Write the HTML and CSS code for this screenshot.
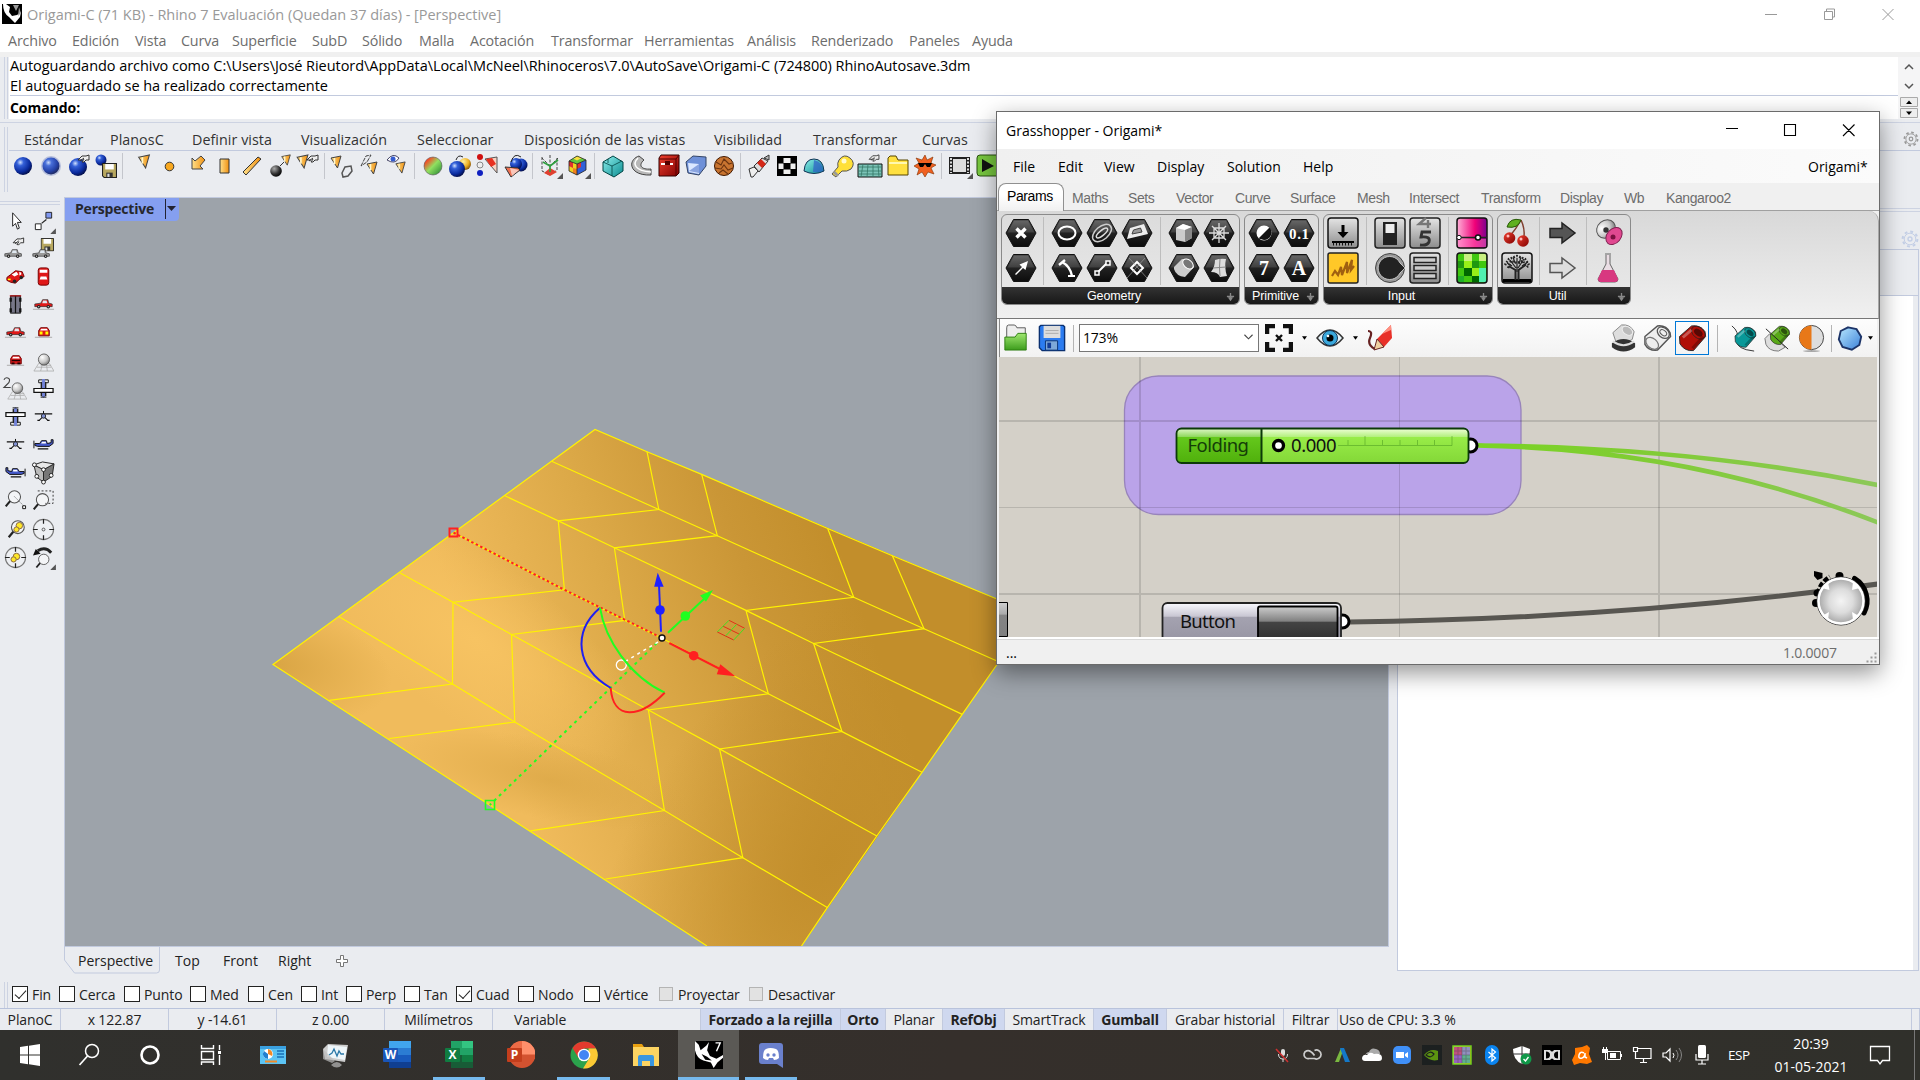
FILE: index.html
```html
<!DOCTYPE html>
<html lang="es">
<head>
<meta charset="utf-8">
<title>Origami-C (71 KB) - Rhino 7</title>
<link rel="stylesheet" href="styles.css">
</head>
<body>
<svg class="defs" width="0" height="0" aria-hidden="true">
<defs>
<radialGradient id="blue" cx=".35" cy=".3" r=".75"><stop offset="0" stop-color="#cfe0ff"/><stop offset=".25" stop-color="#3460d8"/><stop offset=".7" stop-color="#0a2a9c"/><stop offset="1" stop-color="#040c40"/></radialGradient>
<radialGradient id="grayb" cx=".35" cy=".3" r=".75"><stop offset="0" stop-color="#fff"/><stop offset=".6" stop-color="#c8c8c8"/><stop offset="1" stop-color="#777"/></radialGradient>
<radialGradient id="gold" cx=".35" cy=".3" r=".75"><stop offset="0" stop-color="#fff0a0"/><stop offset=".6" stop-color="#f0b020"/><stop offset="1" stop-color="#805008"/></radialGradient>
<radialGradient id="bomb" cx=".35" cy=".3" r=".75"><stop offset="0" stop-color="#aaa"/><stop offset=".6" stop-color="#333"/><stop offset="1" stop-color="#000"/></radialGradient>
<linearGradient id="or" x1="0" x2="1" y1="0" y2="0"><stop offset="0" stop-color="#ffe08a"/><stop offset="1" stop-color="#f09010"/></linearGradient>
<linearGradient id="rgb" x1="0" x2="1" y1="0" y2="1"><stop offset=".15" stop-color="#ff3a20"/><stop offset=".5" stop-color="#90e060"/><stop offset="1" stop-color="#208030"/></linearGradient>
<linearGradient id="teal" x1="0" x2="1" y1="0" y2="1"><stop offset="0" stop-color="#8ff0ee"/><stop offset="1" stop-color="#0a8c90"/></linearGradient>
<linearGradient id="sky" x1="0" x2="1" y1="0" y2="1"><stop offset="0" stop-color="#b8e8ff"/><stop offset="1" stop-color="#3a80d8"/></linearGradient>
<linearGradient id="hexg" x1="0" x2="0" y1="0" y2="1"><stop offset="0" stop-color="#555"/><stop offset=".5" stop-color="#222"/><stop offset="1" stop-color="#0c0c0c"/></linearGradient>
<linearGradient id="btn" x1="0" x2="0" y1="0" y2="1"><stop offset="0" stop-color="#e4e4e4"/><stop offset="1" stop-color="#8c8c8c"/></linearGradient>
<linearGradient id="pink" x1="0" x2="1" y1="0" y2="0"><stop offset="0" stop-color="#ffb0d8"/><stop offset=".6" stop-color="#f00078"/><stop offset="1" stop-color="#7a0090"/></linearGradient>
<linearGradient id="red" x1="0" x2="1" y1="0" y2="1"><stop offset="0" stop-color="#f04030"/><stop offset="1" stop-color="#800000"/></linearGradient>
<linearGradient id="grn" x1="0" x2="0" y1="0" y2="1"><stop offset="0" stop-color="#a0e870"/><stop offset="1" stop-color="#3c9c1c"/></linearGradient>
<symbol id="hex" viewBox="0 0 32 30"><path d="M8.500 1.500h15l7.500 13.500-7.500 13.500h-15L1 15z" fill="url(#hexg)" stroke="#111"/><path d="M9 3h14l6.500 11.500H2.500z" fill="#fff" opacity=".12"/></symbol>
<symbol id="hand" viewBox="0 0 12 9"><path d="M0 6 4 2h4l3-1v5H8L6 8H4l2-3M0 6h4M2 7l4-3" fill="#eee" stroke="#333"/></symbol>
<symbol id="disk" viewBox="0 0 14 14"><path d="M.5.500h13v13H2L.5 12z" fill="#b8a860" stroke="#222"/><path d="M3 1h8v5H3z" fill="#fff"/><path d="M4 9h6v4H4z" fill="#333"/><path d="M5 10h2v3H5z" fill="#ddd"/></symbol>
<symbol id="cone" viewBox="0 0 12 14"><path d="M1 3 11 1 7.500 13z" fill="url(#or)" stroke="#444"/><path d="M4.500 3v6" stroke="#fff8d0" stroke-width="1.500"/></symbol>
<symbol id="car" viewBox="0 0 22 12"><path d="M1 9V6l7-1 2-4h6l1 4 4 1v3z" fill="currentColor" stroke="#333" stroke-width=".8"/><path d="M10.500 2h4l1 3H9.500z" fill="#dfe8f0"/><circle cx="5.500" cy="9" r="2" fill="#222"/><circle cx="16.500" cy="9" r="2" fill="#222"/><circle cx="5.500" cy="9" r=".8" fill="#ccc"/><circle cx="16.500" cy="9" r=".8" fill="#ccc"/></symbol>
<symbol id="planeS" viewBox="0 0 22 12"><path d="M1 2v8M2 5h5l2-3h5l1 3 4-1V1h2v4l-4 3H5L2 7z" fill="#4458c8" stroke="#111"/><path d="M9.500 3h4v2h-5z" fill="#fff"/><path d="M5 10.500h11" stroke="#111" stroke-width="1.400"/></symbol>
<symbol id="planeF" viewBox="0 0 22 12"><path d="M1 3.500h20" stroke="#111" stroke-width="1.300"/><path d="M11 0v4M11 6l-5 5M11 6l5 5M4 11h3M15 11h3" stroke="#111" stroke-width="1.200"/><circle cx="11" cy="6" r="2.500" fill="#8090d0" stroke="#222"/></symbol>
<symbol id="planeT" viewBox="0 0 22 22"><path d="M6 2h10v3H6z" fill="#fff" stroke="#111"/><path d="M8 4h6v15H8z" fill="#222"/><path d="M9.500 1h3v18l-1.500 2-1.500-2z" fill="#7484d8"/><path d="M1 11h20v4H1z" fill="#fff" stroke="#111" stroke-width="1.300"/><path d="M8 20h6" stroke="#111"/></symbol>
<symbol id="grd" viewBox="0 0 22 22"><path d="M6 13h11l5 8H1zM4 17h15M10 13l-2 8M14 13l1 8M8 15h11" fill="none" stroke="#aaa" stroke-width=".8"/><circle cx="11.500" cy="9" r="5.800" fill="url(#grayb)" stroke="#444" stroke-width=".8"/></symbol>
<symbol id="lens" viewBox="0 0 22 22"><circle cx="12" cy="9" r="7" fill="#f4f5f7" stroke="#555" stroke-width="1.200"/><path d="m7 14-5 6" stroke="#222" stroke-width="2.400"/></symbol>
<symbol id="cross" viewBox="0 0 24 24"><circle cx="12" cy="12" r="10.500" fill="#eef0f3" stroke="#777" stroke-width="1.200"/><path d="M12 1v5M12 18v5M1 12h5M18 12h5" stroke="#222" stroke-width="1.300"/></symbol>
<symbol id="gear" viewBox="0 0 18 18"><circle cx="9" cy="9" r="7.400" fill="none" stroke="currentColor" stroke-width="2" stroke-dasharray="2.900 2.910"/><circle cx="9" cy="9" r="5.800" fill="none" stroke="currentColor"/><circle cx="9" cy="9" r="2" fill="none" stroke="currentColor" stroke-width="1.400"/></symbol>
<symbol id="tri" viewBox="0 0 6 6"><path d="M6 0v6H0z" fill="#555"/></symbol>
<symbol id="tube" viewBox="0 0 30 30"><path d="M1.500 13 14 2q9-1.500 14 6l.5 5L16 27.500q-9 1-14-7z" fill="currentColor" stroke="#222" stroke-width=".9"/><ellipse cx="21" cy="9" rx="8" ry="5.500" transform="rotate(40 21 9)" fill="currentColor" stroke="#222" stroke-width=".7"/><ellipse cx="21" cy="9" rx="5" ry="3.200" transform="rotate(40 21 9)" fill="#000" opacity=".5"/><path d="m5 14 9-8" stroke="#fff" stroke-width="3" opacity=".3"/><path d="m15 25 11-12" stroke="#000" stroke-width="3" opacity=".25"/></symbol>
</defs>
</svg>

<div class="app">
  <header class="titlebar">
    <svg class="logo" viewBox="0 0 20 20"><path d="M0 0h20v20H0z"/><path d="M1 0q0 9 6 13l6 6 5-6 1-5-4 3-5 1-3-4 1-5-4-3z" fill="#fff"/><path d="M11 1h6l-3 6zM17 3l2 6-3 3z" fill="#999"/></svg>
    <span>Origami-C (71 KB) - Rhino 7 Evaluación (Quedan 37 días) - [Perspective]</span>
    <svg class="wctl" viewBox="0 0 140 12"><path d="M11 6.500h12M128.500 1l11 11M139.500 1l-11 11M70.500 3.500h8v8h-8zM72.500 3V1h8v8h-2" fill="none" stroke="#999"/></svg>
  </header>
  <nav class="menu"><span>Archivo</span><span>Edición</span><span>Vista</span><span>Curva</span><span>Superficie</span><span>SubD</span><span>Sólido</span><span>Malla</span><span>Acotación</span><span>Transformar</span><span>Herramientas</span><span>Análisis</span><span>Renderizado</span><span>Paneles</span><span>Ayuda</span></nav>
  <section class="command">
    <i class="grip"></i>
    <div class="cmd-text">
      <p>Autoguardando archivo como C:\Users\José Rieutord\AppData\Local\McNeel\Rhinoceros\7.0\AutoSave\Origami-C (724800) RhinoAutosave.3dm</p>
      <p class="second">El autoguardado se ha realizado correctamente</p>
      <p class="prompt">Comando:</p>
    </div>
    <svg class="cmd-scroll" viewBox="0 0 22 62"><path d="M0 0h22v62H0z" fill="#f5f5f6"/><path d="m7 12 4-4 4 4M7 27l4 4 4-4" fill="none" stroke="#555" stroke-width="1.500"/><path d="M2.500 40.500h17v9h-17zM2.500 51.500h17v9h-17z" fill="#eee" stroke="#aaa"/><path d="m8 47 3-3.500 3 3.500zM8 54.500h6L11 58z"/></svg>
  </section>
  <section class="tools">
    <i class="grip"></i>
    <div class="tools-body">
      <nav class="tabs"><span>Estándar</span><span>PlanosC</span><span>Definir vista</span><span>Visualización</span><span>Seleccionar</span><span>Disposición de las vistas</span><span>Visibilidad</span><span>Transformar</span><span>Curvas</span><svg class="gear" width="16" height="16"><use href="#gear"/></svg></nav>
      <div class="iconbar">
        <svg viewBox="0 0 24 24"><circle cx="12" cy="12" r="9" fill="url(#blue)"/></svg>
        <svg viewBox="0 0 24 24"><circle cx="12" cy="12" r="10" fill="#8090c8" opacity=".5"/><circle cx="12" cy="12" r="8.500" fill="url(#blue)" opacity=".85"/></svg>
        <svg viewBox="0 0 24 24"><circle cx="11" cy="13" r="9" fill="url(#blue)"/><use href="#hand" x="11" y="0" width="12" height="9"/></svg>
        <svg viewBox="0 0 24 24"><circle cx="7" cy="6" r="5.500" fill="url(#blue)"/><use href="#disk" x="8" y="9" width="15" height="15"/></svg>
        <i></i>
        <svg viewBox="0 0 24 24"><use href="#cone" x="8" y="0" width="14" height="15"/></svg>
        <svg viewBox="0 0 24 24"><circle cx="12.500" cy="12.500" r="4.300" fill="#f8a820" stroke="#333"/></svg>
        <svg viewBox="0 0 24 24"><path d="M8 4v11h11l-3-3 5-6-4-4-6 5z" transform="translate(-1 0)" fill="url(#or)" stroke="#444"/></svg>
        <svg viewBox="0 0 24 24"><path d="M8 5h9v14H8z" fill="url(#or)" stroke="#333"/></svg>
        <svg viewBox="0 0 24 24"><path d="m3 18 15-15 3 2L6 21z" fill="url(#or)" stroke="#333"/></svg>
        <svg viewBox="0 0 24 24"><circle cx="8" cy="17" r="5.800" fill="url(#bomb)"/><path d="m12 12 4-4" stroke="#333"/><use href="#cone" x="12" y="0" width="12" height="12"/></svg>
        <svg viewBox="0 0 24 24"><use href="#cone" x="-1" y="0" width="15" height="15"/><use href="#hand" x="10" y="0" width="14" height="9"/></svg>
        <i></i>
        <svg viewBox="0 0 24 24"><use href="#cone" x="-1" y="1" width="14" height="14"/><path d="m12 19 3-6 6-1 1 5-4 5-5 1z" fill="none" stroke="#555" stroke-width="1.500"/></svg>
        <svg viewBox="0 0 24 24"><path d="M3 12 8 2l5-1-4 7z" fill="none" stroke="#444" stroke-dasharray="4 1"/><use href="#cone" x="7" y="7" width="14" height="14"/></svg>
        <svg viewBox="0 0 24 24"><path d="M1 6q6-8 12-2-4 7-12 2z" fill="#fff" stroke="#446"/><circle cx="7" cy="5" r="2.500" fill="#345cd0"/><use href="#cone" x="8" y="7" width="13" height="13"/></svg>
        <i></i>
        <svg viewBox="0 0 24 24"><circle cx="12" cy="12" r="9" fill="url(#rgb)" stroke="#555" stroke-width=".6"/></svg>
        <svg viewBox="0 0 24 24"><circle cx="17" cy="10" r="6" fill="url(#gold)"/><circle cx="9" cy="15" r="8" fill="url(#blue)"/><path d="M8 6q2-6 7-3" fill="none" stroke="#222"/></svg>
        <svg viewBox="0 0 24 24"><circle cx="4" cy="3" r="3" fill="#d01010"/><circle cx="4" cy="11" r="3" fill="#eee" stroke="#888"/><circle cx="4" cy="19" r="3" fill="#1020c0"/><path d="m9 5 12-2v16z" fill="#f8d0c0" stroke="#555"/><path d="m10 5 6-1 4 6-5 3z" fill="#e83020"/></svg>
        <svg viewBox="0 0 24 24"><circle cx="17" cy="11" r="6.500" fill="url(#blue)"/><circle cx="12" cy="10" r="6" fill="url(#blue)"/><path d="m1 13 13 1 2 2-9 7z" fill="#f07050" stroke="#333"/><path d="m8 22 7-6-9-2" fill="#fff" opacity=".6"/><path d="M7 8Q10-2 17 3" fill="none" stroke="#222"/></svg>
        <i></i>
        <svg viewBox="0 0 24 24"><path d="M3 3v14l8 4 7-5V3M11 1v20M11 12 3 4M11 12l8-8" fill="none" stroke="#444" stroke-dasharray="3 1.500"/><path d="m5 19 6-5 7 4-7 4z" fill="#e04030"/><path d="m11 12 8-6M11 12 4 8M11 12v6" stroke="#30a040" stroke-width="1.700"/><use href="#tri" x="18" y="19" width="6" height="6"/></svg>
        <svg viewBox="0 0 24 24"><path d="m3 7 8 3v11l-8-4z" fill="#f0d020"/><path d="m11 10 9-4v10l-9 5z" fill="#3060d8"/><path d="m3 7 8-5 9 4-9 4z" fill="#60c840"/><path d="m3 12 4 2V8.500L3 7zM11 10l4-2v5l-4 2z" fill="#e03030"/><path d="m7 14 4 1v6l-4-2z" fill="#f08020"/><path d="m7 4.500 5-2.500 4 2-5 2.500z" fill="#f8e040"/><path d="m3 7 8 3 9-4v10l-9 5-8-4V7l8-5 9 4M11 10v11" fill="none" stroke="#222" stroke-width=".8"/><use href="#tri" x="19" y="19" width="6" height="6"/></svg>
        <i></i>
        <svg viewBox="0 0 24 24"><path d="M2 8 12 2l10 6v9l-9 6-11-6z" fill="url(#teal)" stroke="#044"/><path d="m2 8 9 4 10-5M11 12v10M7 9V5" fill="none" stroke="#044" stroke-width=".8"/></svg>
        <svg viewBox="0 0 24 24"><path d="M10 2C-2 6 0 22 22 21v-6c-10 1-13-4-7-9z" fill="#b8b8b8" stroke="#444"/><path d="M9 4c-6 6-3 13 13 14" fill="none" stroke="#fff" stroke-width="1.500"/></svg>
        <svg viewBox="0 0 24 24"><path d="M2 4 4 1h18v18l-3 3H2z" fill="url(#red)" stroke="#300"/><path d="M2 5h17v17M19 5l3-4" fill="none" stroke="#500"/><path d="M4 10h12" stroke="#fff" stroke-width="2"/><path d="M8 7h5v4H8z" fill="#500"/></svg>
        <svg viewBox="0 0 24 24"><path d="M2 8 9 2l13 1v9l-7 9-11-2z" fill="#6e90d8" stroke="#346"/><path d="m4 9 11 1v10L5 18z" fill="#dce8ff"/><path d="m5 17 10-7v9z" fill="#8aa4e0"/></svg>
        <svg viewBox="0 0 24 24"><circle cx="12" cy="12" r="9.500" fill="#c87430" stroke="#401800"/><path d="M4 8l5 3 3-6 5 5 3-1M3 14l6 1 3-4 4 5 5-2M7 19l4-3 5 4" fill="none" stroke="#6c3410" stroke-width="1.100"/></svg>
        <i></i>
        <svg viewBox="0 0 24 24"><path d="m2 15 5-2 4 4-5 6H4z" fill="#eee" stroke="#333"/><path d="m7 12 8-8 6 3-9 11z" fill="#ddd" stroke="#333"/><path d="m10 9 4-4 5 5-4 4z" fill="#d42818"/><path d="m17 4 5-3v5z" fill="#bbb" stroke="#333"/></svg>
        <svg viewBox="0 0 24 24"><path d="M2 2h20v20H2z"/><path d="M8.500 4h7v5h-7zM3.500 9.500h5v5.500h-5zM15.500 9.500h5v5.500h-5zM8.500 15.500h7V20h-7z" fill="#eee"/></svg>
        <svg viewBox="0 0 24 24"><path d="M2 17Q3 5 12 5t10 12q-10 5-20 0z" fill="url(#teal)" stroke="#135"/><path d="M12 6q9 2 9 11-6 2-10 1z" fill="#3060c8" opacity=".7"/></svg>
        <svg viewBox="0 0 24 24"><path d="M9 6q5-7 11-2t1 11q-4 3-9 2l-6 6-4-3 6-7q-1-4 1-7z" fill="#ffe038" stroke="#555"/><path d="m4 18 4 4" stroke="#999" stroke-width="3"/><circle cx="14" cy="7" r="2.500" fill="#fffbd0"/></svg>
        <svg viewBox="0 0 24 24"><path d="M0 10h24v13H0z" fill="#7cc4b8" stroke="#111"/><path d="M0 13h24M0 17h24M0 20h24M5 10 3 23M10 10 9 23M15 10v13M20 10l1 13" stroke="#376" stroke-width=".8"/><use href="#hand" x="10" y="0" width="13" height="8"/></svg>
        <svg viewBox="0 0 24 24"><path d="M2 21V4l2-2h6l2 4h10v15z" fill="#ffe040" stroke="#554400"/><path d="M3 9h18" stroke="#fff8b0" stroke-width="2"/></svg>
        <svg viewBox="0 0 24 24"><path d="m12 1 2 5 6-3-2 6 5 2-5 3 3 6-6-2-3 5-3-5-5 3 2-6-5-3 5-3-3-5 6 2z" fill="#f06020" stroke="#803000" stroke-width=".6"/><path d="M5 9h14l-2 4h-3l-2-3-2 3H7z"/></svg>
        <i></i>
        <svg viewBox="0 0 24 24"><path d="M1 3h21v17H1z" fill="#222"/><path d="M5 5h13v13H5z" fill="#ddd"/><path d="M3 4v15M20 4v15" stroke="#ddd" stroke-dasharray="2 1.500" stroke-width="2"/><use href="#tri" x="19" y="19" width="6" height="6"/></svg>
        <svg viewBox="0 0 24 24"><rect x="1" y="1" width="24" height="21" rx="3" fill="#78c840" stroke="#285010"/><path d="M6 5v13l12-6z" fill="#111"/></svg>
      </div>
    </div>
  </section>

  <main class="work">
    <div class="left">
      <aside class="palette">
        <svg viewBox="0 0 24 24"><path d="M9 4v14l3-3 2 6 2-1-2-6h4z" fill="#fff" stroke="#222"/></svg>
        <svg viewBox="0 0 24 24"><path d="M3.500 15.500h6v6h-6z" fill="#fff" stroke="#222"/><path d="M14.500 3.500h6v6h-6z" fill="#8098f0" stroke="#222"/><path d="m10 15 5-4" stroke="#222" stroke-width="1.300"/><use href="#tri" x="19" y="20" width="6" height="6"/></svg>
        <svg viewBox="0 0 24 24"><use href="#hand" x="8" y="0" width="15" height="9"/><use href="#car" class="c-gray" x="0" y="12" width="19" height="11"/></svg>
        <svg viewBox="0 0 24 24"><use href="#disk" x="9" y="1" width="14" height="14"/><use href="#car" class="c-gray" x="0" y="12" width="19" height="11"/></svg>
        <svg viewBox="0 0 24 24"><path d="m3 13 4-3 5-4 7 1 2 5-5 3-4 4-5-1-4-2z" fill="#e01818" stroke="#700"/><path d="m8 10 5-3 2 3-4 2zM16 7l2 1v2l-2 1z" fill="#fff"/><circle cx="11" cy="17" r="1.900" fill="#222"/><circle cx="18" cy="13" r="1.800" fill="#222"/><path d="M4 15h3" stroke="#ff0" stroke-width="1.600"/></svg>
        <svg viewBox="0 0 24 24"><rect x="6.500" y="3" width="11" height="18" rx="2.500" fill="#e01818" stroke="#700"/><path d="M8 5h8v3H8zM8 15l1-3h6l1 3z" fill="#fff"/></svg>
        <svg viewBox="0 0 24 24"><rect x="7" y="3" width="10" height="18" fill="#778" stroke="#111"/><path d="M12 3v18" stroke="#111" stroke-width="1.300"/><path d="M7 5v4M17 5v4M7 16v4M17 16v4" stroke="#111" stroke-width="2.400"/><path d="M6 3h12" stroke="#c00"/></svg>
        <svg viewBox="0 0 24 24"><path d="M1 17h22" stroke="#aaa"/><use href="#car" class="c-red" x="2" y="6" width="20" height="11"/></svg>
        <svg viewBox="0 0 24 24"><path d="M1 17h22" stroke="#aaa"/><use href="#car" class="c-red" x="2" y="6" width="20" height="11"/></svg>
        <svg viewBox="0 0 24 24"><path d="M3 17h18" stroke="#aaa"/><path d="M7 15.500V10l2-3h7l2 3v5.500z" fill="#e01818" stroke="#700"/><path d="M9.500 8h6l1 2h-8z" fill="#fff"/><path d="M8 11h3v3H8zM14 11h3v3h-3z" fill="#ff0"/></svg>
        <svg viewBox="0 0 24 24"><path d="M3 17h18" stroke="#aaa"/><path d="M7 15.500V10l2-3h7l2 3v5.500z" fill="#e01818" stroke="#700"/><path d="M9.500 8h6l1 2h-8z" fill="#fff"/><path d="M8 12h9M8 15h3M14 15h3" stroke="#200" stroke-width="1.600"/></svg>
        <svg viewBox="0 0 24 24"><use href="#grd" x="1" y="2" width="22" height="22"/></svg>
        <svg viewBox="0 0 24 24"><use href="#grd" x="3" y="3" width="21" height="21"/><path d="M0 3q1-3 4-2t1 5l-5 5h7" fill="none" stroke="#444" stroke-width="1.200"/></svg>
        <svg viewBox="0 0 24 24"><use href="#planeT" x="1" y="1" width="22" height="22"/></svg>
        <svg viewBox="0 0 24 24"><use href="#planeT" x="1" y="1" width="22" height="22" transform="rotate(180 12 12)"/></svg>
        <svg viewBox="0 0 24 24"><use href="#planeF" x="2" y="6" width="20" height="11"/></svg>
        <svg viewBox="0 0 24 24"><use href="#planeF" x="2" y="6" width="20" height="11"/></svg>
        <svg viewBox="0 0 24 24"><use href="#planeS" x="1" y="6" width="22" height="12"/></svg>
        <svg viewBox="0 0 24 24"><use href="#planeS" x="1" y="6" width="22" height="12" transform="matrix(-1 0 0 1 24 0)"/></svg>
        <svg viewBox="0 0 24 24"><path d="m2 4 10 5v13L5 17z" fill="#bbb" stroke="#222"/><path d="M12 9 23 3l-2 13-9 6z" fill="#777" stroke="#222"/><path d="m2 4 9-3 12 2-11 6z" fill="#e8e8e8" stroke="#222"/><g fill="#fff" stroke="#222"><circle cx="2.500" cy="4" r="2"/><circle cx="12" cy="9" r="2"/><circle cx="5" cy="16" r="2"/><circle cx="20" cy="15" r="2"/><circle cx="12" cy="22" r="2"/></g></svg>
        <svg viewBox="0 0 24 24"><use href="#lens" x="0" y="0" width="20" height="20"/><path d="m11 8 9 9" stroke="#222" stroke-dasharray="1 2"/><path d="M19.500 17.500h3v3h-3z" fill="#fff" stroke="#111"/></svg>
        <svg viewBox="0 0 24 24"><use href="#lens" x="0" y="3" width="20" height="20"/><path d="M6 2h16v13h-8" fill="none" stroke="#333" stroke-dasharray="2 2"/></svg>
        <svg viewBox="0 0 24 24"><use href="#lens" x="3" y="1" width="21" height="21"/><circle cx="16" cy="8" r="3.400" fill="#ffe828" stroke="#864"/><circle cx="13" cy="12" r="2.700" fill="#ffe828" stroke="#864"/></svg>
        <svg viewBox="0 0 24 24"><use href="#cross"/><circle cx="12" cy="12" r="1.500" fill="none" stroke="#555"/></svg>
        <svg viewBox="0 0 24 24"><use href="#cross"/><circle cx="13" cy="11" r="3.400" fill="#ffe828" stroke="#864"/><circle cx="10" cy="14" r="2.700" fill="#ffe828" stroke="#864"/></svg>
        <svg viewBox="0 0 24 24"><use href="#lens" x="3" y="7" width="17" height="17"/><path d="M20 7Q14 0 6 5" fill="none" stroke="#222" stroke-width="3"/><path d="m1 10 3-7 5 5z" fill="#111"/><use href="#tri" x="19" y="19" width="6" height="6"/></svg>
      </aside>
      <div class="view-col">
        <div class="viewport">
          <svg class="scene" viewBox="65 198 1323 748">
            <defs>
              <linearGradient id="pl" gradientUnits="userSpaceOnUse" x1="470" y1="650" x2="830" y2="520"><stop offset="0" stop-color="#f0bb5c"/><stop offset=".4" stop-color="#dca948"/><stop offset=".75" stop-color="#ca9636"/><stop offset="1" stop-color="#c28e2b"/></linearGradient>
              <radialGradient id="hi" gradientUnits="userSpaceOnUse" cx="0" cy="0" r="1" gradientTransform="translate(475 640) rotate(35) scale(190 80)"><stop offset="0" stop-color="#f7c362"/><stop offset="1" stop-color="#f7c362" stop-opacity="0"/></radialGradient>
              <radialGradient id="sh" gradientUnits="userSpaceOnUse" cx="0" cy="0" r="1" gradientTransform="translate(550 780) rotate(12) scale(150 40)"><stop offset="0" stop-color="#dba746" stop-opacity=".75"/><stop offset="1" stop-color="#dba746" stop-opacity="0"/></radialGradient>
              <radialGradient id="lf" gradientUnits="userSpaceOnUse" cx="0" cy="0" r="1" gradientTransform="translate(273 664) rotate(10) scale(120 60)"><stop offset="0" stop-color="#d9a544"/><stop offset="1" stop-color="#d9a544" stop-opacity="0"/></radialGradient>
              <radialGradient id="dk" gradientUnits="userSpaceOnUse" cx="0" cy="0" r="1" gradientTransform="translate(830 860) rotate(-55) scale(330 190)"><stop offset="0" stop-color="#c28e2b"/><stop offset="1" stop-color="#c28e2b" stop-opacity="0"/></radialGradient>
            </defs>
            <g id="sheet">
              <path d="M595 429.500 1100 643 997 664.500 801.500 946H707L273 664.500z" fill="url(#pl)"/>
              <path d="M595 429.500 1100 643 997 664.500 801.500 946H707L273 664.500z" fill="url(#hi)"/>
              <path d="M595 429.500 1100 643 997 664.500 801.500 946H707L273 664.500z" fill="url(#sh)"/>
              <path d="M595 429.500 1100 643 997 664.500 801.500 946H707L273 664.500z" fill="url(#lf)"/>
              <path d="M595 429.500 1100 643 997 664.500 801.500 946H707L273 664.500z" fill="url(#dk)"/>
            </g>
            <g fill="none" stroke="#fff200" stroke-width="1.200">
              <path d="M707 946 273 664.500 595 429.500 647 451.700 701.700 474.400 827.700 528.500 892.400 555.700 997 599M801.500 946 827.300 907.600 876.800 836 922 772.300 962.200 714.400 997 664.500"/>
              <path d="M551.600 461.300 658.800 509.500 717.300 535.700 853.700 597.300 924 628.700 997 661M504.900 495.800 558.300 520.900 614.400 547.800 746 610.400 813.600 643.500 962.200 714.400M453.500 532.600 564.400 589.800 624.800 620.400 662 638.300 768.300 693.800 842 731.600 922 772.300M400.200 572.900 453 602.200 511.500 634.500 648.400 710 719.600 748.900 876.800 836M338.800 616.600 452.500 684 514.800 722 664.400 810.500 742.800 857.700 827.300 907.600"/>
              <path d="M647 451.700 658.800 509.500 558.300 520.900 564.400 589.800 453 602.200 452.500 684 329.400 700.300M701.700 474.400 717.300 535.700 614.400 547.800 624.800 620.400 511.500 634.500 514.800 722 389.300 738.500M827.700 528.500 853.700 597.300 746 610.400 768.300 693.800 648.400 710 664.400 810.500 530.400 830.800M892.400 555.700 924 628.700 813.600 643.500 842 731.600 719.600 748.900 742.800 857.700 605.500 879"/>
            </g>
            <g fill="none" stroke-width="2">
              <path d="M453.500 532.600 564.400 589.800 662 638" stroke="#ff2020" stroke-dasharray="2.500 2.500"/>
              <path d="M662 638 489.800 805" stroke="#20ff20" stroke-dasharray="3 4"/>
              <path d="M658 642 626 661" stroke="#fff" stroke-dasharray="3 4" stroke-width="1.500"/>
              <circle cx="621.300" cy="665" r="5" stroke="#fff" stroke-width="1.300"/>
              <path d="M449.500 528.500h8v8h-8z" stroke="#ff2020"/><path d="M485.500 800.500h9v9h-9z" stroke="#20ff20" stroke-width="1.600"/>
              <path d="M600 607.700C572 632 576 668 610.700 688" stroke="#2020f0"/>
              <path d="M600 607.700C605 640 630 676 664.700 692.700" stroke="#20ff20"/>
              <path d="M610.700 688C613 721 640 718 664.700 692.700" stroke="#ff2020"/>
              <path d="M661 631.700 659 585" stroke="#2020ff"/><path d="M668 632.700 704 599" stroke="#20ff20"/><path d="M669.300 643 720 669" stroke="#ff2020"/>
            </g>
            <path d="m657.700 572.700 6 14h-9.500z" fill="#2020ff"/><circle cx="660" cy="610" r="4.800" fill="#2020ff"/>
            <path d="m713 590-13 5.500 6 6.200z" fill="#20ff20"/><circle cx="685.300" cy="616" r="4.800" fill="#20ff20"/>
            <path d="m735.300 676.300-15-12-3.500 10z" fill="#ff2020"/><circle cx="693.700" cy="655.700" r="4.800" fill="#ff2020"/>
            <path d="m729 620.300 15.700 8M723 626.200l16.500 8M717.300 632l16.400 8" stroke="#e03018" fill="none"/><path d="m729 620.300-11.700 11.700M736.800 624.300 725.500 636M744.700 628.300 733.700 640" stroke="#40e020" fill="none"/>
            <circle cx="662" cy="638" r="3" fill="#fff" stroke="#111" stroke-width="1.400"/>
          </svg>
          <div class="view-label"><span>Perspective</span><svg viewBox="0 0 14 20"><path d="M.5 0v20" stroke="#223"/><path d="M2 7h9l-4.500 5z" fill="#223"/></svg></div>
        </div>
        <nav class="view-tabs">
          <svg viewBox="0 0 98 28"><path d="M.5 0v14l10 13h82q3 0 3-3V0" fill="none" stroke="#c2cade"/></svg>
          <span>Perspective</span><span>Top</span><span>Front</span><span>Right</span>
          <svg class="plus" viewBox="0 0 12 12"><path d="M4.500.500h3v4h4v3h-4v4h-3v-4h-4v-3h4z" fill="#fff" stroke="#777"/></svg>
        </nav>
      </div>
    </div>
    <aside class="side">
      <div class="side-grip"></div>
      <div class="side-head"><svg class="gear2" width="18" height="18"><use href="#gear"/></svg></div>
      <div class="side-panel"><div class="side-top"></div><div class="side-body"></div></div>
    </aside>
  </main>

  <section class="osnap"><i class="grip"></i>
    <b class="on"></b><span>Fin</span><b></b><span>Cerca</span><b></b><span>Punto</span><b></b><span>Med</span><b></b><span>Cen</span><b></b><span>Int</span><b></b><span>Perp</span><b></b><span>Tan</span><b class="on"></b><span>Cuad</span><b></b><span>Nodo</span><b></b><span>Vértice</span><b class="off"></b><span>Proyectar</span><b class="off"></b><span>Desactivar</span>
  </section>
  <footer class="status"><span>PlanoC</span><span>x 122.87</span><span>y -14.61</span><span>z 0.00</span><span>Milímetros</span><span class="var">Variable</span><span class="on">Forzado a la rejilla</span><span class="on">Orto</span><span>Planar</span><span class="on">RefObj</span><span>SmartTrack</span><span class="on">Gumball</span><span>Grabar historial</span><span>Filtrar</span><span class="cpu">Uso de CPU: 3.3 %</span><span></span></footer>

  <footer class="taskbar">
    <div class="apps">
      <div><svg viewBox="0 0 28 28"><path d="m4 6 8-1.200V13.500H4zM13 4.700 24 3v10.500H13zM4 14.500h8v8.700L4 22zM13 14.500h11V25l-11-1.700z" fill="#fff"/></svg></div>
      <div><svg viewBox="0 0 28 28"><circle cx="16" cy="10" r="6.500" fill="none" stroke="#fff" stroke-width="1.500"/><path d="m11.500 15-8 9" stroke="#fff" stroke-width="1.700"/></svg></div>
      <div><svg viewBox="0 0 28 28"><circle cx="14" cy="14" r="8.500" fill="none" stroke="#fff" stroke-width="2.600"/></svg></div>
      <div><svg viewBox="0 0 28 28"><path d="M4.500 4v3.500h12V4M4.500 10.500h12v8h-12zM4.500 24v-3h12v3M22.500 4v5M22.500 14v10" fill="none" stroke="#fff" stroke-width="1.400"/><path d="M21 10h3v3h-3z" fill="#fff"/></svg></div>
      <div><svg viewBox="0 0 28 28"><path d="M1 5h26v18H1z" fill="#5cc4f4"/><path d="M1 5h26v3H1z" fill="#3aa0e0"/><circle cx="9" cy="13" r="5" fill="#fff"/><path d="M9 13V8a5 5 0 0 1 4 7z" fill="#f08a28"/><path d="M9 13v5a5 5 0 0 1-4-8z" fill="#2080d0"/><path d="M18 10h7M18 13h7M18 16h7" stroke="#1870b8" stroke-width="1.500"/><path d="M6 20.500h12" stroke="#f08a28" stroke-width="2"/></svg></div>
      <div><svg viewBox="0 0 28 28"><path d="M2 8 7 3l20 1-3 17-20-3z" fill="#ccc"/><path d="m7 4 19 2-2 13-18-3z" fill="#eef6fa"/><path d="m8 14 3-2 2-4 3 7 2-5 2 3h3" fill="none" stroke="#2a78a8" stroke-width="1.300"/><path d="M2 8v10l9 4 3-2M10 24q6-6 11 0-5 5-11 0z" fill="#bbb" opacity=".7"/></svg></div>
      <div><svg viewBox="0 0 28 28"><path d="M6 0h22v7H6z" fill="#41a5ee"/><path d="M6 7h22v7H6z" fill="#2b7cd3"/><path d="M6 14h22v7H6z" fill="#185abd"/><path d="M6 21h22v6H6z" fill="#103f91"/><rect y="7" width="15" height="14" rx="1" fill="#1a56b8"/><text x="7.500" y="18" class="ic">W</text></svg></div>
      <div class="open"><svg viewBox="0 0 28 28"><path d="M6 0h22v27H6z" fill="#21a366"/><path d="M17 0h11v7H17z" fill="#33c481"/><path d="M6 14h11v13H6z" fill="#185c37"/><path d="M17 14h11v7H17z" fill="#107c41"/><path d="M17 21h11v6H17z" fill="#185c37"/><rect y="7" width="15" height="14" rx="1" fill="#107c41"/><text x="7.500" y="18" class="ic">X</text></svg></div>
      <div><svg viewBox="0 0 28 28"><circle cx="15" cy="13.500" r="13.500" fill="#d35230"/><path d="M15 0a13.500 13.500 0 0 1 13.500 13.500H15z" fill="#ff8f6b"/><path d="M15 0v13.500H1.500A13.500 13.500 0 0 1 15 0z" fill="#ed6c47"/><rect y="7" width="15" height="14" rx="1" fill="#c43e1c"/><text x="7.500" y="18" class="ic">P</text></svg></div>
      <div class="open"><svg viewBox="0 0 28 28"><circle cx="14" cy="14" r="13.500" fill="#2ba24c"/><path d="M2.500 7a13.500 13.500 0 0 1 23.500.500H14l-5.500 9.500z" fill="#e33b2e"/><path d="M26 7.500a13.500 13.500 0 0 1-13 20l6.500-10.500-1-9.500z" fill="#fcc934"/><circle cx="14" cy="14" r="6.300" fill="#fff"/><circle cx="14" cy="14" r="5" fill="#4285f4"/></svg></div>
      <div><svg viewBox="0 0 28 28"><path d="M1 3h9l2 3v19H1z" fill="#e8a010"/><path d="M1 6h26v19H1z" fill="#fcd462"/><path d="M6 25V16q0-2 2-2h12q2 0 2 2v9h-4v-5h-8v5z" fill="#3a96e0"/></svg></div>
      <div class="open active"><svg viewBox="0 0 30 30"><path d="M0 0h30v30H0z"/><path d="M0 0v10q2 9 9 11l8 2 3 6 4-6 6-5v-3l-7 4-7-3-3-6 2-9-3 4-6 5-2-6z" fill="#fff"/><path d="m7 14 6 3 5 4-7-1z"/><path d="M22 2h5l-4 9" fill="none" stroke="#fff" stroke-width="1.500"/></svg></div>
      <div class="open"><svg viewBox="0 0 28 28"><path d="M5 2h18q3 0 3 3v22l-6-4H5q-3 0-3-3V5q0-3 3-3z" fill="#6a80cc"/><path d="M6 17q0-8 3-9 4-2 10 0 3 1 3 9-2 2-5 2l-1-2h-4l-1 2q-3 0-5-2z" fill="#fff"/><circle cx="11" cy="14" r="1.700" fill="#6a80cc"/><circle cx="17" cy="14" r="1.700" fill="#6a80cc"/></svg></div>
    </div>
    <div class="tray">
      <svg viewBox="0 0 20 20"><rect x="9" y="4" width="4" height="7" rx="2" fill="#ddd"/><path d="M6.500 9q0 5 4.500 5t4.500-5M11 14v3" fill="none" stroke="#ddd"/><path d="m4 4 12 13" stroke="#d03030" stroke-width="1.500"/></svg>
      <svg viewBox="0 0 20 20"><path d="M12.500 5.500a4.500 4.500 0 1 1 0 8H7a4 4 0 1 1 1.500-7q2 1 4 4" fill="none" stroke="#ccc" stroke-width="1.700"/></svg>
      <svg viewBox="0 0 20 20"><path d="m3 17 6-14h3L7 17z" fill="#7ab840"/><path d="M8 3h4l6 14h-5z" fill="#1478c8"/></svg>
      <svg viewBox="0 0 20 20"><path d="M3 11q1-4 4-4 2-5 7-3 4 1 4 5H4z" fill="#aaa"/><path d="M0 13q1-4 5-3 3-4 7-1 8-1 8 4 0 3-3 3H3q-3 0-3-3z" fill="#fff"/></svg>
      <svg viewBox="0 0 20 20"><rect x="1" y="1" width="18" height="18" rx="5" fill="#4090f8"/><path d="M4 7h8v6H4zM13 9l3-2v6l-3-2z" fill="#fff"/></svg>
      <svg viewBox="0 0 20 20"><path d="M0 0h20v20H0z" fill="#1c2020"/><path d="M2 10q6-7 14-4v9q-8 2-14-5z" fill="#5c9410"/><path d="M4 10q4-5 8-1-3 5-8 1z" fill="none" stroke="#1c2020" stroke-width="1.200"/></svg>
      <svg viewBox="0 0 20 20"><path d="M1 1h18v18H1z" fill="url(#or)" stroke="#70d020" stroke-width="1.500"/><path d="M2 2h8v8H2z" fill="#c05080"/><path d="M10 2h8v8h-8z" fill="#9090c0"/><path d="M2 10h8v8H2z" fill="#9860c0"/><path d="M10 10h8v8h-8z" fill="#60b090"/><path d="M6 2v16M10 2v16M14 2v16M2 6h16M2 10h16M2 14h16" stroke="#444" opacity=".4"/></svg>
      <svg viewBox="0 0 20 20"><rect x="3" width="14" height="20" rx="7" fill="#0a84f0"/><path d="m6.500 7 7 6-3.500 3V4l3.500 3-7 6" fill="none" stroke="#fff" stroke-width="1.200"/></svg>
      <svg viewBox="0 0 20 20"><path d="m10 1 8 3q0 11-8 15Q1 15 1 4z" fill="#fff"/><path d="M10 1v18M1 9h17" stroke="#333"/><circle cx="14" cy="14" r="5.500" fill="#109848"/><path d="m11.500 14 2 2 3-4" fill="none" stroke="#fff" stroke-width="1.300"/></svg>
      <svg viewBox="0 0 20 20"><path d="M0 0h20v20H0z"/><path d="M2 5h16v10H2z" fill="#ddd"/><path d="M4 6.500q4 0 4 3.500t-4 3.500zM16 6.500q-4 0-4 3.500t4 3.500z"/><path d="M8 5q2 3 4 0zM8 15q2-3 4 0z"/></svg>
      <svg viewBox="0 0 20 20"><path d="m3 3 7-1 5-2 3 3-1 6 3 8-5 2-7-1-6 2-2-5 3-6z" fill="#ff7800"/><path d="M12 8q-4-2-5 2t3 3q3-1 3-5v4l2 1" fill="none" stroke="#fff" stroke-width="1.500"/></svg>
      <svg viewBox="0 0 20 20"><path d="M5.500 6.500h13v8h-13z" fill="none" stroke="#fff"/><path d="M8 8h6v5H8zM19 9h1v3h-1zM0 4h6v4H4v7H3V8H0zM1 2h1v2H1zM4 2h1v2H4z" fill="#fff"/></svg>
      <svg viewBox="0 0 20 20"><path d="M6 3.500h13v10H3.500V7M8 17.500h7M11.500 14v3M1.500 2.500h4v4h-4z" fill="none" stroke="#fff" stroke-width="1.200"/></svg>
      <svg viewBox="0 0 20 20"><path d="M1 8h3l4-4v12l-4-4H1z" fill="none" stroke="#fff" stroke-width="1.200"/><path d="M11 8q2 2 0 5" fill="none" stroke="#fff"/><path d="M14 5q4 5 0 10M17 3q5 7 0 14" fill="none" stroke="#888"/></svg>
      <svg viewBox="0 0 20 20"><rect x="6" y="0" width="8" height="13" rx="1.500" fill="#fff"/><path d="M4 9v6h12V9M10 15v4M6 19h8" fill="none" stroke="#fff" stroke-width="1.200"/></svg>
      <span class="lang">ESP</span>
      <div class="clock"><span>20:39</span><span>01-05-2021</span></div>
      <svg class="note" viewBox="0 0 22 22"><path d="M1.500 2.500h19v14h-7L11 20l-2.500-3.500h-7z" fill="none" stroke="#fff" stroke-width="1.300"/></svg>
      <i class="peek"></i>
    </div>
  </footer>

  <section class="gh">
    <header class="gh-title"><span>Grasshopper - Origami*</span><svg viewBox="0 0 130 14"><path d="M0 5.500h12M58.500 1.500h11v11h-11zM117 1.500l11.500 11.500M128.500 1.500 117 13" fill="none" stroke="#000" stroke-width="1.100"/></svg></header>
    <nav class="gh-menu"><span>File</span><span>Edit</span><span>View</span><span>Display</span><span>Solution</span><span>Help</span><span>Origami*</span></nav>
    <nav class="gh-tabs"><span class="act">Params</span><span>Maths</span><span>Sets</span><span>Vector</span><span>Curve</span><span>Surface</span><span>Mesh</span><span>Intersect</span><span>Transform</span><span>Display</span><span>Wb</span><span>Kangaroo2</span></nav>
    <div class="ribbon">
      <div class="grp geo">
        <div class="g-icons">
          <div class="pair">
            <svg viewBox="0 0 32 30"><use href="#hex"/><path d="m11.500 10.500 9 9M20.500 10.500l-9 9" stroke="#fff" stroke-width="3.400"/></svg>
            <svg viewBox="0 0 32 30"><use href="#hex"/><path d="m10 21 7-7-2.500-2.500L23 8l-2.500 9-2.500-2-7 7z" fill="#fff"/></svg>
          </div><i></i>
          <div class="pair">
            <svg viewBox="0 0 32 30"><use href="#hex"/><ellipse cx="16" cy="15" rx="8.500" ry="6.500" fill="none" stroke="#fff" stroke-width="2"/></svg>
            <svg viewBox="0 0 32 30"><use href="#hex"/><ellipse cx="16" cy="15" rx="11" ry="6.500" transform="rotate(-40 16 15)" fill="none" stroke="#ccc" stroke-width="1.500"/><ellipse cx="16" cy="15" rx="7" ry="2.500" transform="rotate(-40 16 15)" fill="none" stroke="#ddd" stroke-width="1.500"/></svg>
            <svg viewBox="0 0 32 30"><use href="#hex"/><path d="m6 21 3-11 14-4 4 10z" fill="#eee"/><path d="m11 16 1.500-4 7-2 1.500 4z" fill="#999" stroke="#444"/></svg>
            <svg viewBox="0 0 32 30"><use href="#hex"/><path d="m8 12 6-5M11 9q8 4 10 14" fill="none" stroke="#fff" stroke-width="2.400"/><path d="M17 23h7" stroke="#fff" stroke-width="2"/></svg>
            <svg viewBox="0 0 32 30"><use href="#hex"/><path d="M11 20 21 10" stroke="#fff" stroke-width="2"/><path d="M9 18h4v4H9zM20 8h4v4h-4z" fill="#333" stroke="#fff" stroke-width="1.500"/></svg>
            <svg viewBox="0 0 32 30"><use href="#hex"/><path d="m16 9 6 6-6 6-6-6z" fill="none" stroke="#fff" stroke-width="2"/><path d="m8 5 18 20M24 5 6 25" stroke="#aaa" opacity=".6"/></svg>
          </div><i></i>
          <div class="pair">
            <svg viewBox="0 0 32 30"><use href="#hex"/><path d="m8 10 7-4 9 3v11l-7 4-9-2z" fill="#ccc"/><path d="m8 10 7-4 9 3-7 3z" fill="#fff"/><path d="M17 12v12l7-4V9z" fill="#888"/></svg>
            <svg viewBox="0 0 32 30"><use href="#hex"/><path d="M16 5v20M6 15h20M9 8l14 14M23 8 9 22M11 10h10v10H11z" fill="none" stroke="#ddd" stroke-width="1.300"/></svg>
            <svg viewBox="0 0 32 30"><use href="#hex"/><path d="m6 14 8-8q9 0 12 8l-9 10q-9-1-11-8z" fill="#ccc"/><ellipse cx="20" cy="11" rx="6" ry="4" transform="rotate(40 20 11)" fill="#777" stroke="#fff"/></svg>
            <svg viewBox="0 0 32 30"><use href="#hex"/><path d="M12 7q6-2 11-1-2 8 1 17l-7 1q-2-5-9-5 4-5 4-12z" fill="#ddd"/><path d="M17 6q-1 9 0 17M10 15l13-1" stroke="#888" fill="none"/></svg>
          </div>
        </div>
        <footer>Geometry<svg viewBox="0 0 10 10"><path d="M5 1v8M1 5h8M3 6l2 3 2-3" fill="none" stroke="#888" stroke-width="1.500"/></svg></footer>
      </div>
      <div class="grp prim">
        <div class="g-icons"><div class="pair">
          <svg viewBox="0 0 32 30"><use href="#hex"/><circle cx="16" cy="15" r="7.500" fill="#fff"/><path d="M10.500 20.500 21.500 9.500A7.500 7.500 0 0 1 16 22z" fill="#111"/></svg>
          <svg viewBox="0 0 32 30"><use href="#hex"/><text x="16" y="21" class="hx" textLength="20">0.1</text></svg>
          <svg viewBox="0 0 32 30"><use href="#hex"/><text x="16" y="22" class="hx big">7</text></svg>
          <svg viewBox="0 0 32 30"><use href="#hex"/><text x="16" y="22" class="hx big">A</text></svg>
        </div></div>
        <footer>Primitive<svg viewBox="0 0 10 10"><path d="M5 1v8M1 5h8M3 6l2 3 2-3" fill="none" stroke="#888" stroke-width="1.500"/></svg></footer>
      </div>
      <div class="grp inp">
        <div class="g-icons">
          <div class="pair">
            <svg viewBox="0 0 32 32"><rect x="1" y="1" width="30" height="30" rx="3" fill="url(#btn)" stroke="#111" stroke-width="1.500"/><path d="M14.500 8h3v7h4L16 21l-5.500-6h4zM5 24h22v2H5z"/><path d="M6 27h20" stroke="#111" stroke-dasharray="1 2" stroke-width="3"/></svg>
            <svg viewBox="0 0 32 32"><rect x="1" y="1" width="30" height="30" rx="2" fill="#ffc828" stroke="#222" stroke-width="1.500"/><path d="m5 24 3-5 3 4 3-8 1 8 5-13v11l5-13-1 10 3-4" fill="none" stroke="#a06010" stroke-width="2.200"/></svg>
          </div><i></i>
          <div class="pair">
            <svg viewBox="0 0 32 32"><rect x="1" y="1" width="30" height="30" rx="3" fill="url(#btn)" stroke="#222" stroke-width="1.500"/><rect x="9" y="5" width="14" height="23" fill="#222"/><path d="M11.500 7h9v9h-9z" fill="#eee"/></svg>
            <svg viewBox="0 0 32 32"><rect x="1" y="1" width="30" height="30" rx="3" fill="url(#btn)" stroke="#222" stroke-width="1.500"/><path d="m17 1-7 6h12M19 3v8" fill="none" stroke="#777" stroke-width="2.400"/><path d="M22 15h-9l-1 5q10-1 8 5-2 4-9 3" fill="none" stroke="#333" stroke-width="2.800"/></svg>
            <svg viewBox="0 0 32 32"><circle cx="16" cy="16" r="14.500" fill="#999" stroke="#444"/><path d="M26 11l5 5-5 5A11.500 11.500 0 1 1 26 11z" fill="#222" stroke="#ddd" stroke-width=".8"/></svg>
            <svg viewBox="0 0 32 32"><rect x="1" y="1" width="30" height="30" rx="3" fill="url(#btn)" stroke="#222" stroke-width="1.500"/><path d="M5 5.500h22v5H5zM5 13.500h22v5H5zM5 21.500h22v5H5z" fill="#ccc" stroke="#222" stroke-width="1.500"/></svg>
          </div><i></i>
          <div class="pair">
            <svg viewBox="0 0 32 32"><rect x="1" y="1" width="30" height="30" rx="3" fill="url(#pink)" stroke="#111" stroke-width="1.500"/><path d="M1 20.500h30" stroke="#222" stroke-width="1.500"/><path d="M2 22h28v8H2z" fill="#ff70c0" opacity=".5"/><circle cx="22" cy="20.500" r="2.500" fill="#fff" stroke="#111" stroke-width="1.500"/><circle cx="3" cy="20.500" r="2.200" fill="#fff" stroke="#111"/></svg>
            <svg viewBox="0 0 32 32"><rect x="1" y="1" width="30" height="30" rx="3" fill="#40c810"/><path d="M8 2h8v7H8zM23 2h7v7h-7z" fill="#c8f080"/><path d="M2 9h6v7H2zM16 9h7v7h-7z" fill="#209810"/><path d="M8 9h8v7H8zM16 16h7v8h-7z" fill="#98f018"/><path d="M8 16h8v8H8zM16 24h7v6h-7z" fill="#006800"/><path d="M23 16h7v14h-7z" fill="#50f0b0"/><path d="M2 24h6v6H2z" fill="#20b028"/><rect x="1" y="1" width="30" height="30" rx="3" fill="none" stroke="#111" stroke-width="1.500"/></svg>
          </div>
        </div>
        <footer>Input<svg viewBox="0 0 10 10"><path d="M5 1v8M1 5h8M3 6l2 3 2-3" fill="none" stroke="#888" stroke-width="1.500"/></svg></footer>
      </div>
      <div class="grp util">
        <div class="g-icons">
          <div class="pair">
            <svg viewBox="0 0 32 32"><path d="M20 3Q15 12 9 19M20 3q4 8 3 18" fill="none" stroke="#804030" stroke-width="1.500"/><path d="M6 10Q9 0 20 3q-3 9-14 7z" fill="#60b020" stroke="#285808"/><circle cx="8.500" cy="21" r="5.800" fill="url(#red)"/><circle cx="22" cy="24" r="5.800" fill="url(#red)"/><circle cx="7" cy="19" r="1.500" fill="#fbb"/><circle cx="20" cy="22" r="1.500" fill="#fbb"/></svg>
            <svg viewBox="0 0 32 32"><rect x="1" y="1" width="30" height="30" rx="3" fill="url(#btn)" stroke="#111" stroke-width="1.500"/><path d="M2 27h28v3H2z"/><path d="M14.500 28V18l-7-4M17.500 28V18l7-5" fill="none" stroke="#222" stroke-width="2"/><path d="M16 20V6M15 16 9 8M17 16l6-9M6 11l5 3M27 10l-6 4M12 5l2 6M20 5l-2 7" fill="none" stroke="#222" stroke-width="1.200"/><path d="M4 13 8 7l8-3 8 3 4 6-3 3M7 16l3-7 6 2 6-2 3 6" fill="none" stroke="#222" stroke-width="2.500" stroke-dasharray="1.500 1.500"/></svg>
          </div><i></i>
          <div class="pair">
            <svg viewBox="0 0 32 32"><path d="M3 11.500h12V6l13 10-13 10v-5.500H3z" fill="#555" stroke="#222" stroke-width="1.500"/></svg>
            <svg viewBox="0 0 32 32"><path d="M3 11.500h12V6l13 10-13 10v-5.500H3z" fill="#ddd" stroke="#555" stroke-width="1.500"/></svg>
          </div><i></i>
          <div class="pair">
            <svg viewBox="0 0 32 32"><ellipse cx="12" cy="12" rx="10" ry="8.500" transform="rotate(-40 12 12)" fill="url(#grayb)" stroke="#555"/><circle cx="12" cy="13" r="2.700" fill="#333"/><ellipse cx="20" cy="19" rx="9.500" ry="7" transform="rotate(-50 20 19)" fill="#e04890" stroke="#802050"/><circle cx="19" cy="20" r="2.500" fill="#7a1040"/></svg>
            <svg viewBox="0 0 32 32"><path d="M11 2h6M12 3v9L4 27q0 3 3 3h14q3 0 3-3l-8-15V3" fill="#eadde4" stroke="#666"/><path d="M8 18h12l4 9q0 3-3 3H7q-3 0-3-3z" fill="#d83880"/></svg>
          </div>
        </div>
        <footer>Util<svg viewBox="0 0 10 10"><path d="M5 1v8M1 5h8M3 6l2 3 2-3" fill="none" stroke="#888" stroke-width="1.500"/></svg></footer>
      </div>
    </div>
    <div class="gh-bar">
      <svg class="b-open" viewBox="0 0 28 30"><path d="M4 15V4q0-3 2-3h6q2 0 3 3h9v12z" fill="#eee" stroke="#555"/><path d="M2 28V14h11l3-4h9v18z" fill="url(#grn)" stroke="#2c7c10"/></svg>
      <svg class="b-save" viewBox="0 0 30 30"><path d="M1.500 3 3 1.500h24l1.500 1.500v25.500h-24l-3-3z" fill="#2c7cf0" stroke="#0a3070" stroke-width="1.500"/><path d="M6 2h18v13H6z" fill="#ddd"/><path d="M8 7h14M8 10h14" stroke="#aaa"/><path d="M8 18h13v10H8z" fill="#7ea8d8" stroke="#0a3070"/><path d="M10 20h4v6h-4z" fill="#123c98"/></svg>
      <i></i>
      <div class="combo"><span>173%</span><svg viewBox="0 0 10 6"><path d="m.5.500 4.500 4.500L9.500.500" fill="none" stroke="#444" stroke-width="1.200"/></svg></div>
      <svg class="b-focus" viewBox="0 0 28 28"><path d="M2 10V2h8M18 2h8v8M26 18v8h-8M10 26H2v-8" fill="none" stroke="#111" stroke-width="4.500"/><path d="m11 11 6 6M17 11l-6 6" stroke="#111" stroke-width="2.400"/></svg>
      <svg class="b-dd" viewBox="0 0 6 4"><path d="M0 0h6L3 4z"/></svg>
      <svg class="b-eye" viewBox="0 0 28 20"><path d="M1 10Q14-6 27 10 14 26 1 10z" fill="#e8f4fa" stroke="#333" stroke-width="1.500"/><circle cx="14" cy="10" r="7.500" fill="#3aa8dc" stroke="#135"/><circle cx="14" cy="10" r="3.500"/><circle cx="12" cy="8" r="1.300" fill="#fff"/></svg>
      <svg class="b-dd" viewBox="0 0 6 4"><path d="M0 0h6L3 4z"/></svg>
      <svg class="b-pen" viewBox="0 0 28 28"><path d="M2 7Q7 7 4 14t5 11" fill="none" stroke="#622" stroke-width="2.200"/><path d="M11 15 25 1l1 13-8 9z" fill="#e83028"/><path d="m16 10 9-9v5z" fill="#ff9080"/><path d="m11 15 7 8-10 3z" fill="#f0d0a0" stroke="#622"/></svg>
      <div class="b-right">
        <svg viewBox="0 0 30 30"><path d="m4 9 9-8q9-1 13 7l-2 8-8 4-9-2z" fill="#ddd" stroke="#888"/><ellipse cx="19" cy="7" rx="6" ry="4" transform="rotate(35 19 7)" fill="#bbb" stroke="#eee"/><path d="M3 20q12-9 24 0v4q-12 9-24 0z" fill="#333"/><path d="M4 18q11 8 22 0" fill="none" stroke="#ddd" stroke-width="2"/></svg>
        <svg viewBox="0 0 30 30"><path d="M2 13 15 2q9-1 13 7l.500 4L15 27q-9 1-13-6z" fill="#eee" stroke="#555" stroke-width="1.500"/><ellipse cx="21" cy="9" rx="7" ry="5" transform="rotate(40 21 9)" fill="none" stroke="#555" stroke-width="1.300"/><ellipse cx="9.500" cy="20" rx="7.500" ry="5" transform="rotate(40 9.500 20)" fill="none" stroke="#777" stroke-width="1.300"/><ellipse cx="21" cy="9" rx="4" ry="2.500" transform="rotate(40 21 9)" fill="none" stroke="#555"/></svg>
        <div class="sel"><svg class="c-dred" viewBox="0 0 30 30"><use href="#tube"/></svg></div>
        <i></i>
        <svg class="c-teal" viewBox="0 0 30 30"><path d="M3 2q8 6 5 15-1 9 18 11" fill="none" stroke="#333"/><use href="#tube" x="5" y="1" width="24" height="26"/></svg>
        <svg class="c-green" viewBox="0 0 30 30"><path d="m2 15 5-5 16 14-7 4q-10 0-13-7z" fill="#ddd" stroke="#777"/><use href="#tube" x="6" y="1" width="23" height="22"/><path d="m3 5 23 21" stroke="#222"/></svg>
        <svg viewBox="0 0 30 30"><circle cx="15" cy="14" r="12.500" fill="#ddd" stroke="#444"/><path d="M15 1.500v25a12.500 12.500 0 0 1 0-25z" fill="#e87818"/><ellipse cx="15" cy="28" rx="9" ry="1" fill="#000" opacity=".3"/></svg>
        <i></i>
        <svg class="b-poly" viewBox="0 0 30 30"><path d="m13 3 9 2 5 8-2 9-8 5-10-3-4-8 2-9z" fill="url(#sky)" stroke="#1c3468" stroke-width="2"/></svg>
        <svg class="dd2" viewBox="0 0 6 4"><path d="M0 0h6L3 4z"/></svg>
      </div>
    </div>
    <div class="gh-canvas">
      <svg viewBox="999 357 878 280">
        <defs>
          <linearGradient id="s1" x1="0" x2="0" y1="0" y2="1"><stop offset="0" stop-color="#e0f8c8"/><stop offset=".24" stop-color="#90d860"/><stop offset=".26" stop-color="#64c81c"/><stop offset="1" stop-color="#50b00c"/></linearGradient>
          <linearGradient id="s2" x1="0" x2="0" y1="0" y2="1"><stop offset="0" stop-color="#f0ffd8"/><stop offset=".24" stop-color="#b4f080"/><stop offset=".26" stop-color="#98ec48"/><stop offset="1" stop-color="#84d838"/></linearGradient>
          <linearGradient id="b1" x1="0" x2="0" y1="603" y2="640" gradientUnits="userSpaceOnUse"><stop offset="0" stop-color="#fafaff"/><stop offset=".36" stop-color="#c8c6d2"/><stop offset=".38" stop-color="#a4a2b0"/><stop offset="1" stop-color="#9896a4"/></linearGradient>
          <linearGradient id="b2" x1="0" x2="0" y1="606" y2="640" gradientUnits="userSpaceOnUse"><stop offset="0" stop-color="#d0d0d0"/><stop offset=".45" stop-color="#808080"/><stop offset=".47" stop-color="#444"/><stop offset="1" stop-color="#303030"/></linearGradient>
          <linearGradient id="b3" x1="0" x2="0" y1="602" y2="637" gradientUnits="userSpaceOnUse"><stop offset="0" stop-color="#d0d0d0"/><stop offset=".35" stop-color="#aaa"/><stop offset=".37" stop-color="#848484"/><stop offset="1" stop-color="#808080"/></linearGradient>
          <linearGradient id="w" x1="1477" x2="1877" y1="0" y2="0" gradientUnits="userSpaceOnUse"><stop offset="0" stop-color="#7ad424"/><stop offset=".4" stop-color="#80cc34"/><stop offset="1" stop-color="#8cc858"/></linearGradient>
          <radialGradient id="ball"><stop offset="0" stop-color="#f4f4f4"/><stop offset=".5" stop-color="#dcdcdc"/><stop offset="1" stop-color="#a0a0a0"/></radialGradient>
        </defs>
        <path d="M999 357h878v280H999z" fill="#d4d0c8"/>
        <rect x="1124.500" y="376" width="396.500" height="138.500" rx="34" fill="#baa3e9" stroke="#9884bb" stroke-width="1.300"/>
        <g stroke="#000" stroke-opacity=".13"><path d="M1140 357v280M1659 357v280M999 421h878M999 594h878" stroke-width="2"/><path d="M1399.500 357v280M999 507.500h878"/></g>
        <path d="M1477 445.500Q1690 447 1878 485M1477 445.500Q1690 449 1878 522.500" fill="none" stroke="url(#w)" stroke-width="4.600"/>
        <path d="M1349 622Q1620 619 1878 584" fill="none" stroke="#585651" stroke-width="5"/>
        <circle cx="1470.500" cy="445.500" r="6.500" fill="#fff" stroke="#000" stroke-width="3"/>
        <path d="M1261 428.500h-79q-5 0-5 5v24q0 5 5 5h79z" fill="url(#s1)"/><path d="M1261 428.500h203q5 0 5 5v24q0 5-5 5h-203z" fill="url(#s2)"/>
        <rect x="1176.500" y="428.500" width="292" height="34.500" rx="5" fill="none" stroke="#0c3a08" stroke-width="1.800"/><path d="M1261.500 428v35" stroke="#0c3a08" stroke-width="2"/>
        <path d="M1338 445.500h114V436M1348 440v5M1365 436v9M1382.500 440v5M1400 440v5M1417.500 440v5M1434.500 440v5" fill="none" stroke="#4c9c20" stroke-opacity=".55"/>
        <circle cx="1278.500" cy="445.500" r="5" fill="#fff" stroke="#000" stroke-width="3.300"/>
        <text x="1187.500" y="451.500" textLength="61.500" class="cv gr">Folding</text><text x="1291" y="451.500" textLength="45.500" class="cv">0.000</text>
        <circle cx="1342.500" cy="621.500" r="6.500" fill="#fff" stroke="#000" stroke-width="3"/>
        <rect x="1162.500" y="603" width="178.500" height="50" rx="5" fill="url(#b1)" stroke="#222" stroke-width="1.800"/>
        <rect x="1258" y="606.500" width="79.500" height="40" rx="2" fill="url(#b2)" stroke="#000" stroke-width="1.800"/>
        <text x="1180" y="628" textLength="56" class="cv">Button</text>
        <path d="M998 602.500h9.500v34H998z" fill="url(#b3)" stroke="#000"/>
        <g fill="none" stroke="#000"><path d="M1854.500 578.500A26 26 0 0 1 1864 613" stroke-width="5" stroke-linecap="round"/><path d="M1818 594A25 25 0 0 1 1830 577" stroke-width="5" stroke-dasharray="5 2"/></g>
        <path d="m1814 571 8.500 2v5l-5 2-3.500-4z"/><circle cx="1839.500" cy="576" r="4"/><circle cx="1816" cy="603" r="4"/><circle cx="1817" cy="593" r="3.500"/>
        <circle cx="1841" cy="601" r="24" fill="url(#ball)" stroke="#333"/><circle cx="1841" cy="601" r="22.500" fill="none" stroke="#fff" stroke-width="2.500"/>
        <path d="m1828 582 1.500 8-8-2zM1853 582l-1 8 8-2zM1822 616l7-4-1 8zM1859 616l-7-4 1 8z" fill="#fff"/>
      </svg>
    </div>
    <footer class="gh-status"><span>...</span><span class="ver">1.0.0007</span><svg viewBox="0 0 12 12"><path d="M8.500.500h2v2h-2zM4.500 4.500h2v2h-2zM8.500 4.500h2v2h-2zM.5 8.500h2v2h-2zM4.500 8.500h2v2h-2zM8.500 8.500h2v2h-2z" fill="#999"/></svg></footer>
  </section>
</div>
</body>
</html>
```
FILE: styles.css
```css
* { box-sizing: border-box; }
body { margin: 0; overflow: hidden; font: 14px "Open Sans", "Noto Sans", sans-serif; color: #222; }
p { margin: 0; }
.defs { position: absolute; }
.app {
  width: 1920px; height: 1080px; position: relative; overflow: hidden; background: #eaecf0;
  display: grid; grid-template-rows: 28px 24px 67px 78px 778px 33px 22px 50px; white-space: nowrap;
}
.app svg { display: block; }
.c-gray { color: #9a9a9a; } .c-red { color: #e01818; } .c-dred { color: #b01008; } .c-teal { color: #089898; } .c-green { color: #58a818; }
.grip { width: 4px; border: solid #cdd3e2; border-width: 0 1px; flex: none; }

.titlebar { background: #fff; display: flex; align-items: center; padding: 0 22px 0 2px; color: #999; font-size: 14.500px; letter-spacing: -.02px; }
.logo { width: 20px; height: 20px; margin-right: 5px; }
.wctl { width: 140px; height: 12px; margin-left: auto; margin-right: 4px; }
.menu {
  background: #fff; display: grid; align-items: center; padding-left: 8px; padding-top: 1px; color: #6d6d6d; font-size: 14.300px; letter-spacing: -.15px;
  grid-template-columns: 64px 63px 46px 51px 80px 50px 57px 51px 81px 93px 103px 64px 98px 63px 60px;
}
.command { border-top: 5px solid #f0f0f0; display: flex; padding-left: 4px; background: #fff; }
.command .grip { background: #eaecf0; box-shadow: -4px 0 #eaecf0, 1px 0 #eaecf0; }
.cmd-text { flex: 1; padding-left: 2px; font-size: 14.500px; letter-spacing: -.05px; color: #000; }
.cmd-text p { line-height: 18px; height: 19px; }
.cmd-text .second { line-height: 19px; }
.cmd-text .prompt { border-top: 1px solid #c2cade; height: 24px; line-height: 23px; font-weight: 700; font-size: 14px; }
.cmd-scroll { width: 22px; height: 62px; }

.tools { border-top: 3px solid #eaecf0; box-shadow: inset 0 1px #cdd3e2; display: flex; padding: 5px 0 5px 4px; }
.tools-body { flex: 1; padding-left: 1px; }
.tabs {
  display: grid; align-items: center; height: 24px; border-bottom: 1px solid #c2cade; color: #333; font-size: 14.300px; letter-spacing: .05px; padding: 1px 0 0 15px;
  grid-template-columns: 86px 82px 109px 116px 107px 190px 99px 109px 100px 1fr;
}
.gear { justify-self: end; margin-right: 1px; color: #999; }
.iconbar { display: flex; align-items: center; gap: 3.800px; padding: 2px 0 0 2px; }
.iconbar svg { width: 24px; height: 24px; flex: none; overflow: visible; }
.iconbar i { width: 3px; height: 26px; border-left: 1px solid #c4c6cc; }

.work { display: grid; grid-template-columns: 1389px 1fr; }
.left { display: grid; grid-template-columns: 64px 1fr; }
.palette { display: grid; grid-template-columns: 28px 28px; grid-auto-rows: 28.100px; align-content: start; place-items: center; margin: 4px 4px 0 0; padding-left: 1px; border-top: 1px solid #cdd3e2; box-shadow: inset 0 2px #eaecf0, inset 0 3px #cdd3e2; padding-top: 4px; }
.palette svg { width: 23px; height: 23px; overflow: visible; }
.view-col { display: grid; grid-template-rows: 750px 28px; }
.viewport { position: relative; border: 1px solid #c2cade; background: #9da3aa; overflow: hidden; }
.scene { width: 1323px; height: 748px; }
.view-label { position: absolute; left: 0; top: 0; width: 114px; height: 23px; background: #859ff0; display: flex; align-items: center; border-radius: 0 0 4px; padding: 0 0 2px 10px; color: #26282e; font-weight: 700; font-size: 14px; letter-spacing: -.2px; }
.view-label span { width: 90px; }
.view-label svg { width: 14px; height: 20px; }
.view-tabs { display: grid; grid-template-columns: 14px 97px 48px 55px 50px 20px; align-items: center; letter-spacing: 0; padding-bottom: 1px; }
.view-tabs svg { width: 98px; height: 28px; align-self: start; margin-top: -1px; }
.view-tabs .plus { width: 12px; height: 12px; align-self: center; justify-self: end; margin: 0; }
.side { display: grid; grid-template-rows: 15px 37px 722px; padding-left: 8px; }
.side-grip { border-bottom: 1px solid #cdd3e2; box-shadow: inset 0 -2px #eaecf0, inset 0 -3px #cdd3e2; }
.side-head { display: flex; justify-content: flex-end; align-items: flex-end; padding: 0 1px 1px; }
.gear2 { color: #c4cfe6; }
.side-panel { border: 1px solid #c2cade; margin-right: 1px; display: grid; grid-template-rows: 46px 1fr; }
.side-top { border-bottom: 1px solid #c2cade; }
.side-body { background: #fff; margin-right: 5px; }

.osnap {
  display: grid; align-items: center; justify-items: start; padding: 5px 0 0 4px; letter-spacing: -.1px;
  grid-template-columns: 8px 20px 27px 20px 45px 20px 46px 20px 38px 20px 33px 20px 25px 20px 38px 20px 32px 20px 42px 20px 46px 20px 55px 19px 71px 19px 80px;
}
.osnap .grip { height: 26px; align-self: start; margin-top: 2px; }
.osnap b { width: 16px; height: 16px; border: 1px solid #222; background: #fff; }
.osnap b.off { width: 14px; height: 14px; border-color: #b4b4b4; background: #e2e2e2; }
.osnap b.on::after { content: ""; display: block; width: 10px; height: 5px; margin: 3px 0 0 2px; border: solid #222; border-width: 0 0 1.500px 1.500px; transform: rotate(-48deg); }
.status {
  border-top: 1px solid #b9c3dc; display: grid; letter-spacing: -.12px; line-height: 22px; text-align: center;
  grid-template-columns: 61px 108px 108px 108px 108px 208px 140px 45px 57px 62px 89px 73px 117px 54px 574px 8px;
}
.status span { border-right: 1px solid #c2cade; font-size: 14px; }
.status .var { text-align: left; padding-left: 21px; }
.status .cpu { text-align: left; padding-left: 1px; }
.status .on { background: #cfd8ef; font-weight: 700; letter-spacing: -.2px; }

.taskbar { background: linear-gradient(90deg, #30302d, #352f2b 50%, #30302b); display: flex; justify-content: space-between; color: #fff; }
.apps { display: grid; grid-template-columns: 60px 60px 60px 61px 63px 62px 62px 62px 62px 63px 62px 63px 62px; }
.apps div { display: grid; place-items: center; border-bottom: 3px solid transparent; padding-top: 2px; }
.apps svg { width: 28px; height: 28px; }
.apps .open { border-bottom-color: #76b9ed; margin: 0 5px; }
.apps .active { background: #5b5955; margin: 0 1px; }
.ic { font: 700 12px "Open Sans", sans-serif; fill: #fff; text-anchor: middle; }
.tray { display: flex; align-items: center; gap: 10px; height: 50px; }
.tray svg { width: 20px; height: 20px; }
.tray .lang { font-size: 13.500px; margin: 0 3px 0 6px; width: 25px; letter-spacing: -.4px; }
.clock { display: flex; flex-direction: column; align-items: center; width: 90px; gap: 4px; font-size: 14px; line-height: 19px; letter-spacing: 0; }
.tray .note { width: 22px; height: 22px; margin: 0 13px 0 3px; }
.peek { width: 6px; height: 50px; border-left: 1px solid #777; }

.gh {
  position: absolute; left: 996px; top: 111px; width: 884px; height: 554px; border: 1px solid #6b6b6b; background: #f0f0f0;
  box-shadow: 0 8px 22px rgba(0,0,0,.42); display: grid; grid-template-rows: 37px 34px 28px 108px 38px 280px 27px; color: #000;
}
.gh-title { background: #fff; display: flex; justify-content: space-between; align-items: center; padding: 0 23px 1px 9px; letter-spacing: 0; font-size: 14px; }
.gh-title svg { width: 130px; height: 14px; }
.gh-menu { background: linear-gradient(90deg, #f0f0f0, #fbfbfb); display: grid; grid-template-columns: 45px 46px 53px 70px 76px 505px 70px; align-items: center; padding-left: 16px; letter-spacing: 0; }
.gh-tabs { display: grid; grid-template-columns: 66px 56px 48px 59px 55px 67px 52px 72px 79px 64px 42px 1fr; padding-left: 9px; font: 14px/31px "Liberation Sans", Arial, sans-serif; color: #6d6d6d; letter-spacing: -.4px; border-bottom: 1px solid #a0a0a0; }
.gh-tabs .act { background: linear-gradient(#fff 40%, #f0f0f0); border: 1px solid #909090; border-bottom: 0; border-radius: 8px 8px 0 0; color: #000; margin-left: -8px; padding-left: 8px; width: 66px; height: 28px; line-height: 25px; }
.ribbon { background: linear-gradient(#d8d8d8, #f0f0f0); border-radius: 0 10px 0 0; border-right: 1px solid #a8a8a8; display: grid; grid-template-columns: 239px 75px 170px 134px; gap: 4px; padding: 3px 0 13px 4px; border-bottom: 1px solid #777; }
.grp { border: 1px solid #8a8a8a; border-radius: 6px; overflow: hidden; background: linear-gradient(#dcdcdc, #e9e9e9); display: grid; grid-template-rows: 72px 18px; }
.g-icons { display: flex; justify-content: space-between; padding: 0 3px 2px 1px; }
.pair { display: grid; grid-template-rows: 35px 35px; place-items: center; }
.pair svg { width: 32px; height: 32px; }
.g-icons > i { width: 1px; background: #bdbdbd; margin: 2px -1px 0; }
.pair { grid-template-columns: 35px; }
.geo .pair:nth-child(3) { grid-template-columns: 35px 35px 35px; }
.geo .pair:nth-child(5), .prim .pair, .inp .pair:nth-child(3) { grid-template-columns: 35px 35px; }
.grp footer { background: linear-gradient(#333, #161616); color: #fff; font: 12.500px/17px "Liberation Sans", Arial, sans-serif; display: grid; grid-template-columns: 1fr 16px; padding-left: 3px; text-align: center; letter-spacing: -.1px; align-items: center; }
.grp footer svg { width: 9px; height: 9px; margin-left: 3px; }
.hx { font: 700 15px "Liberation Serif", serif; fill: #fff; text-anchor: middle; }
.hx.big { font-size: 20px; }

.gh-bar { background: linear-gradient(#fdfdfd, #f2f2f2); display: flex; align-items: center; margin: 0 2px; border-left: 1px solid #888; }
.gh-bar i { width: 1px; height: 27px; background: #b4b4b4; }
.b-open { width: 26px; height: 28px; margin-left: 3px; }
.b-save { width: 28px; height: 28px; margin: 0 7px 0 9px; }
.combo { width: 180px; height: 28px; border: 1px solid #777; background: #fff; margin: 0 6px 0 5px; display: flex; align-items: center; justify-content: space-between; padding: 0 5px 2px 3px; letter-spacing: -.2px; }
.combo svg { width: 9px; height: 6px; }
.b-focus { width: 28px; height: 28px; }
.b-dd { width: 5px; height: 4px; margin-left: 9px; }
.b-eye { width: 28px; height: 20px; margin-left: 9px; }
.b-pen { width: 28px; height: 28px; margin-left: 8px; }
.b-right { margin-left: auto; display: flex; align-items: center; }
.b-right svg { width: 29px; height: 29px; margin-right: 5px; }
.sel { width: 34px; height: 34px; border: 1px solid #0078d7; padding: 2px; margin: 0 8px 0 -2px; }
.b-right i { margin-right: 11px; }
.b-right i:nth-of-type(2) { margin-right: 4px; }
.b-right .b-poly { margin-right: 4px; width: 28px; }
.b-right .dd2 { width: 5px; height: 4px; margin-right: 4px; }
.gh-canvas { margin: 0 2px; }
.gh-canvas svg { width: 878px; height: 280px; }
.cv { font: 18.500px "Noto Sans", sans-serif; fill: #111; }
.cv.gr { fill: #143c08; }
.gh-status { border-top: 2px solid #fff; box-shadow: inset 0 1px #d8d8d8; display: grid; grid-template-columns: 777px 83px 12px; padding-left: 9px; line-height: 27px; }
.gh-status .ver { color: #6d6d6d; font-size: 14px; letter-spacing: -.2px; }
.gh-status svg { width: 12px; height: 12px; align-self: end; margin-bottom: 2px; }
```
